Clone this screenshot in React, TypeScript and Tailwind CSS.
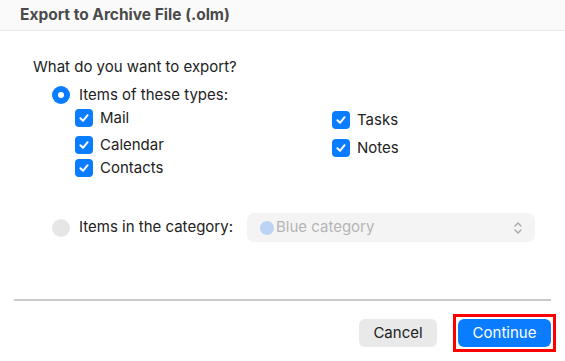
import React from "react";

const Check = () => (
  <span className="flex h-[18px] w-[18px] shrink-0 items-center justify-center rounded-[4px] bg-[#0a7cff]">
    <svg width="12" height="12" viewBox="0 0 12 12" fill="none">
      <path d="M2.4 6.3 L5 8.8 L9.6 3.2" stroke="white" strokeWidth="2" strokeLinecap="round" strokeLinejoin="round" />
    </svg>
  </span>
);

const CheckRow = ({ label }: { label: string }) => (
  <div className="flex items-center gap-[7px]">
    <Check />
    <span>{label}</span>
  </div>
);

export default function App() {
  return (
    <div
      className="relative h-[361px] w-[565px] overflow-hidden bg-white text-[15px] text-[#222]"
      style={{ fontFamily: "Inter, 'Noto Sans', sans-serif" }}
    >
      <div className="flex h-[31px] items-center border-b border-[#e8e8e8] bg-[#fafafa] pl-[20px] text-[15.5px] font-bold text-[#4a4a4a]">
        Export to Archive File (.olm)
      </div>
      <div className="pl-[33px] pr-[30px] pt-[26px]">
        <div className="leading-[20px]">What do you want to export?</div>
        <div className="mt-[8px] flex items-center gap-[9px] pl-[19px] leading-[20px]">
          <span className="flex h-[18px] w-[18px] items-center justify-center rounded-full bg-[#0a7cff]">
            <span className="h-[6px] w-[6px] rounded-full bg-white" />
          </span>
          <span>Items of these types:</span>
        </div>
        <div className="flex pl-[42px] leading-[20px]">
          <div className="flex w-[257px] flex-col">
            <div className="mt-[3px]">
              <CheckRow label="Mail" />
            </div>
            <div className="mt-[7px]">
              <CheckRow label="Calendar" />
            </div>
            <div className="mt-[3px]">
              <CheckRow label="Contacts" />
            </div>
          </div>
          <div className="flex flex-col">
            <div className="mt-[5px]">
              <CheckRow label="Tasks" />
            </div>
            <div className="mt-[8px]">
              <CheckRow label="Notes" />
            </div>
          </div>
        </div>
        <div className="mt-[35px] flex items-center pl-[19px]">
          <span className="h-[18px] w-[18px] shrink-0 rounded-full bg-[#e6e6e6]" />
          <span className="ml-[9px]">Items in the category:</span>
          <div className="ml-[14px] flex h-[29px] flex-1 items-center rounded-[7px] bg-[#f4f4f4] pl-[13px] pr-[12px]">
            <span className="h-[14px] w-[14px] rounded-full bg-[#bcd3f5]" />
            <span className="ml-[2px] text-[#b4b4b4]">Blue category</span>
            <svg className="ml-auto" width="10" height="14" viewBox="0 0 10 14" fill="none">
              <path d="M2 5 L5 2 L8 5" stroke="#a8a8a8" strokeWidth="1.4" strokeLinecap="round" strokeLinejoin="round" />
              <path d="M2 9 L5 12 L8 9" stroke="#a8a8a8" strokeWidth="1.4" strokeLinecap="round" strokeLinejoin="round" />
            </svg>
          </div>
        </div>
      </div>
      <div className="ml-[14px] mt-[57px] h-[2px] w-[537px] bg-[#c9c9c9]" />
      <div className="mt-[13px] flex items-center justify-end pr-[9px]">
        <div className="flex h-[28px] w-[78px] items-center justify-center rounded-[6px] bg-[#e9e9e9] text-[#222]">
          Cancel
        </div>
        <div className="ml-[16px] border-[3px] border-[#ff0000] p-[2px]">
          <div className="flex h-[28px] w-[93px] items-center justify-center rounded-[6px] bg-[#0a7cff] text-white">
            Continue
          </div>
        </div>
      </div>
    </div>
  );
}
